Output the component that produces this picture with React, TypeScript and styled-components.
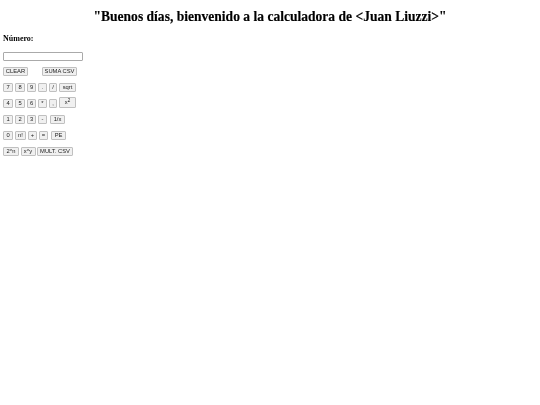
import React from "react";
import styled, { createGlobalStyle } from "styled-components";

const Global = createGlobalStyle`
  html, body { margin: 0; padding: 0; background: #fff; }
  body { font-family: "Liberation Serif", "Times New Roman", serif; color: #000; }
`;

const Page = styled.main`
  display: flex;
  flex-direction: column;
  padding: 9px 3px 0;
  filter: blur(0.25px);
`;

const Title = styled.h1`
  margin: 0 0 10px;
  font-size: 13.55px;
  line-height: 15px;
  font-weight: 700;
  text-align: center;
  -webkit-text-stroke: 0.15px #000;
`;

const Label = styled.label`
  font-size: 8px;
  line-height: 9px;
  font-weight: 700;
  margin-bottom: 9px;
`;

const NumberInput = styled.input`
  box-sizing: border-box;
  width: 80px;
  height: 9px;
  padding: 0;
  margin: 0 0 6px;
  border: 1px solid #aaa;
  border-radius: 1px;
  background: #fff;
`;

const Keys = styled.div`
  display: flex;
  flex-direction: column;
  gap: 7px;
`;

const Row = styled.div<{ $gap?: number }>`
  display: flex;
  align-items: flex-end;
  height: 9px;
  gap: ${(p) => p.$gap ?? 2}px;
`;

const Key = styled.button<{ $w: number; $h?: number; $after?: number }>`
  box-sizing: border-box;
  flex: none;
  width: ${(p) => p.$w}px;
  height: ${(p) => p.$h ?? 9}px;
  margin-right: ${(p) => p.$after ?? 0}px;
  padding: 0;
  display: flex;
  align-items: center;
  justify-content: center;
  font-family: "Liberation Sans", Arial, sans-serif;
  font-size: 5.8px;
  line-height: 1;
  color: #222;
  background: #f0f0f0;
  border: 1px solid #c0c0c0;
  border-radius: 1px;
  sup { font-size: 4.5px; line-height: 0; position: relative; top: -1.5px; }
`;

const rows: [string, number, number?][][] = [
  [["7", 10], ["8", 10], ["9", 9], [".", 9], ["/", 8], ["sqrt", 17]],
  [["4", 10], ["5", 10], ["6", 9], ["*", 9], [",", 8]],
  [["1", 10], ["2", 10], ["3", 9], ["-", 9, 1], ["1/x", 15]],
  [["0", 10], ["n!", 11], ["+", 9], ["=", 9, 1], ["PE", 15]],
];

export default function App() {
  return (
    <Page>
      <Global />
      <Title>"Buenos días, bienvenido a la calculadora de &lt;Juan Liuzzi&gt;"</Title>
      <Label htmlFor="numero">Número:</Label>
      <NumberInput id="numero" type="text" />
      <Keys>
        <Row>
          <Key $w={25} $after={12}>CLEAR</Key>
          <Key $w={35}>SUMA CSV</Key>
        </Row>
        {rows.map((r, i) => (
          <Row key={i}>
            {r.map(([t, w, a]) => (
              <Key key={t} $w={w} $after={a}>{t}</Key>
            ))}
            {i === 1 && <Key $w={17} $h={11}>x<sup>2</sup></Key>}
          </Row>
        ))}
        <Row $gap={1.5}>
          <Key $w={16}>2^n</Key>
          <Key $w={15}>x^y</Key>
          <Key $w={36}>MULT. CSV</Key>
        </Row>
      </Keys>
    </Page>
  );
}
